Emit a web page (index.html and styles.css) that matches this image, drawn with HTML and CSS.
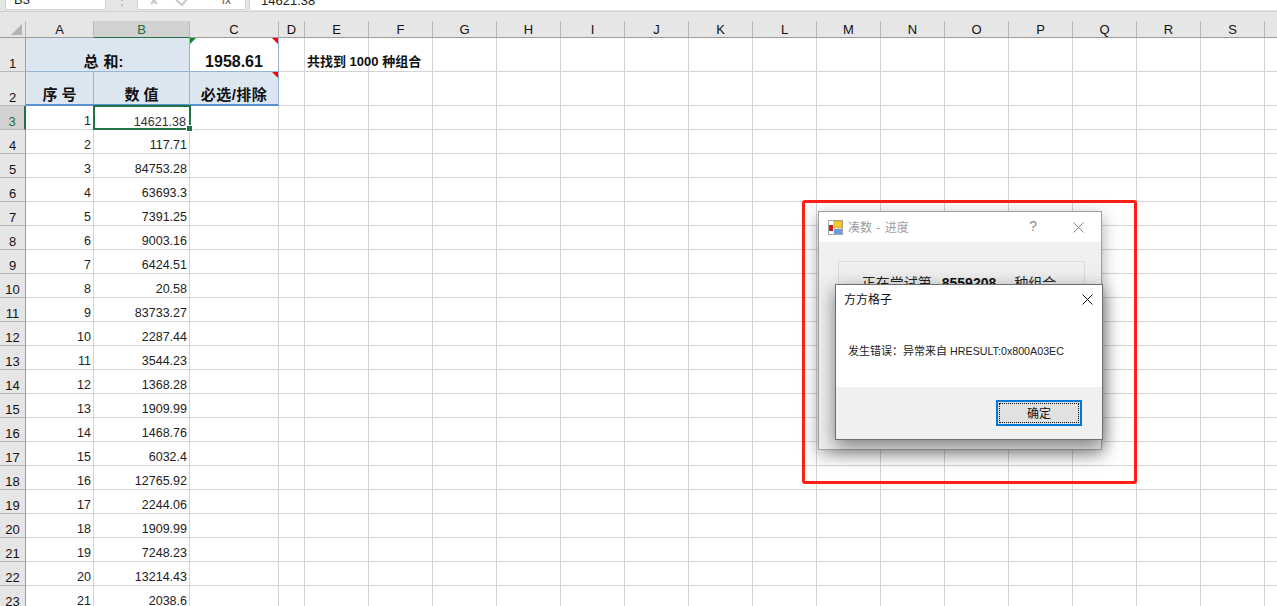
FILE: index.html
```html
<!DOCTYPE html>
<html lang="zh-CN">
<head>
    <meta charset="UTF-8">
    <title>方方格子 - 凑数</title>
    <link rel="stylesheet" href="styles.css">
</head>
<body>
    <div class="formula-bar">
        <div class="name-box">B3</div>
        <div class="bar-sep">⋮</div>
        <div class="fx-box">
            <svg width="60" height="10" viewBox="0 0 60 10"><path d="M13 -2 L19 4 M19 -2 L13 4" stroke="#c8c8c8" stroke-width="2" fill="none"/><path d="M38 0 L44 5 L50 -2" stroke="#c8c8c8" stroke-width="2" fill="none"/></svg>
            <span class="fx">fx</span>
        </div>
        <div class="formula-input">14621.38</div>
    </div>

    <div class="sheet">
        <div class="row col-head">
            <div class="corner"><i></i></div>
            <div class="ch col-a">A</div>
            <div class="ch col-b on">B</div>
            <div class="ch col-c">C</div>
            <div class="ch col-d">D</div>
            <div class="ch col-n">E</div><div class="ch col-n">F</div><div class="ch col-n">G</div><div class="ch col-n">H</div>
            <div class="ch col-n">I</div><div class="ch col-n">J</div><div class="ch col-n">K</div><div class="ch col-n">L</div>
            <div class="ch col-n">M</div><div class="ch col-n">N</div><div class="ch col-n">O</div><div class="ch col-n">P</div>
            <div class="ch col-n">Q</div><div class="ch col-n">R</div><div class="ch col-n">S</div><div class="ch col-n"></div>
        </div>

        <div class="row row-1">
            <div class="rh">1</div>
            <div class="c col-ab head-cell title sum-label">总 和:<span class="tri green"></span></div>
            <div class="c col-c total">1958.61<span class="tri red"></span></div>
            <div class="c col-d"></div>
            <div class="fill"><span class="found">共找到 1000 种组合</span></div>
        </div>
        <div class="row row-2">
            <div class="rh">2</div>
            <div class="c col-a head-cell title">序 号</div>
            <div class="c col-b head-cell title">数 值</div>
            <div class="c col-c head-cell title">必选/排除<span class="tri red"></span></div>
            <div class="c col-d"></div>
            <div class="fill"></div>
        </div>
        <div class="row">
            <div class="rh on">3</div>
            <div class="c col-a">1</div>
            <div class="c col-b selected">14621.38<span class="handle"></span></div>
            <div class="c col-c"></div><div class="c col-d"></div><div class="fill"></div>
        </div>
        <div class="row"><div class="rh">4</div><div class="c col-a">2</div><div class="c col-b">117.71</div><div class="c col-c"></div><div class="c col-d"></div><div class="fill"></div></div>
        <div class="row"><div class="rh">5</div><div class="c col-a">3</div><div class="c col-b">84753.28</div><div class="c col-c"></div><div class="c col-d"></div><div class="fill"></div></div>
        <div class="row"><div class="rh">6</div><div class="c col-a">4</div><div class="c col-b">63693.3</div><div class="c col-c"></div><div class="c col-d"></div><div class="fill"></div></div>
        <div class="row"><div class="rh">7</div><div class="c col-a">5</div><div class="c col-b">7391.25</div><div class="c col-c"></div><div class="c col-d"></div><div class="fill"></div></div>
        <div class="row"><div class="rh">8</div><div class="c col-a">6</div><div class="c col-b">9003.16</div><div class="c col-c"></div><div class="c col-d"></div><div class="fill"></div></div>
        <div class="row"><div class="rh">9</div><div class="c col-a">7</div><div class="c col-b">6424.51</div><div class="c col-c"></div><div class="c col-d"></div><div class="fill"></div></div>
        <div class="row"><div class="rh">10</div><div class="c col-a">8</div><div class="c col-b">20.58</div><div class="c col-c"></div><div class="c col-d"></div><div class="fill"></div></div>
        <div class="row"><div class="rh">11</div><div class="c col-a">9</div><div class="c col-b">83733.27</div><div class="c col-c"></div><div class="c col-d"></div><div class="fill"></div></div>
        <div class="row"><div class="rh">12</div><div class="c col-a">10</div><div class="c col-b">2287.44</div><div class="c col-c"></div><div class="c col-d"></div><div class="fill"></div></div>
        <div class="row"><div class="rh">13</div><div class="c col-a">11</div><div class="c col-b">3544.23</div><div class="c col-c"></div><div class="c col-d"></div><div class="fill"></div></div>
        <div class="row"><div class="rh">14</div><div class="c col-a">12</div><div class="c col-b">1368.28</div><div class="c col-c"></div><div class="c col-d"></div><div class="fill"></div></div>
        <div class="row"><div class="rh">15</div><div class="c col-a">13</div><div class="c col-b">1909.99</div><div class="c col-c"></div><div class="c col-d"></div><div class="fill"></div></div>
        <div class="row"><div class="rh">16</div><div class="c col-a">14</div><div class="c col-b">1468.76</div><div class="c col-c"></div><div class="c col-d"></div><div class="fill"></div></div>
        <div class="row"><div class="rh">17</div><div class="c col-a">15</div><div class="c col-b">6032.4</div><div class="c col-c"></div><div class="c col-d"></div><div class="fill"></div></div>
        <div class="row"><div class="rh">18</div><div class="c col-a">16</div><div class="c col-b">12765.92</div><div class="c col-c"></div><div class="c col-d"></div><div class="fill"></div></div>
        <div class="row"><div class="rh">19</div><div class="c col-a">17</div><div class="c col-b">2244.06</div><div class="c col-c"></div><div class="c col-d"></div><div class="fill"></div></div>
        <div class="row"><div class="rh">20</div><div class="c col-a">18</div><div class="c col-b">1909.99</div><div class="c col-c"></div><div class="c col-d"></div><div class="fill"></div></div>
        <div class="row"><div class="rh">21</div><div class="c col-a">19</div><div class="c col-b">7248.23</div><div class="c col-c"></div><div class="c col-d"></div><div class="fill"></div></div>
        <div class="row"><div class="rh">22</div><div class="c col-a">20</div><div class="c col-b">13214.43</div><div class="c col-c"></div><div class="c col-d"></div><div class="fill"></div></div>
        <div class="row"><div class="rh">23</div><div class="c col-a">21</div><div class="c col-b">2038.6</div><div class="c col-c"></div><div class="c col-d"></div><div class="fill"></div></div>
    </div>

    <!-- 进度窗口 -->
    <div class="win progress">
        <div class="win-title">
            <svg class="app-icon" width="15" height="15" viewBox="0 0 15 15">
                <rect x="0.5" y="0.5" width="14" height="14" fill="#fff" stroke="#a8a8a8"/>
                <rect x="6" y="1" width="8" height="7" fill="#f5c93a" stroke="#b8902a" stroke-width="0.6"/>
                <rect x="1" y="5" width="4" height="6" fill="#c8201c"/>
                <rect x="6" y="9" width="8" height="5" fill="#6a9be0"/>
            </svg>
            <span class="win-name">凑数 - 进度</span>
            <span class="help">?</span>
            <svg class="x-icon faded" width="11" height="11" viewBox="0 0 11 11"><path d="M0.5 0.5 L10.5 10.5 M10.5 0.5 L0.5 10.5" stroke="#8a8a8a" fill="none"/></svg>
        </div>
        <div class="win-body">
            <div class="group">正在尝试第 <b>8559208</b> 种组合</div>
        </div>
    </div>

    <!-- 错误提示 -->
    <div class="win alert">
        <div class="alert-title">
            <span class="alert-name">方方格子</span>
            <svg class="x-icon" width="11" height="11" viewBox="0 0 11 11"><path d="M0.5 0.5 L10.5 10.5 M10.5 0.5 L0.5 10.5" stroke="#111" fill="none"/></svg>
        </div>
        <div class="alert-msg">发生错误：异常来自 <span class="code">HRESULT:0x800A03EC</span></div>
        <div class="alert-foot">
            <button class="ok"><span>确定</span></button>
        </div>
    </div>

    <div class="red-box"></div>
</body>
</html>
```

FILE: styles.css
```css
body {
    margin: 0;
    height: 606px;
    overflow: hidden;
    position: relative;
    background-color: #fff;
    font-family: "Liberation Sans", "Noto Sans CJK SC", sans-serif;
    font-size: 12px;
    color: #222;
}

/* formula bar, cut off at the top of the picture */
.formula-bar {
    display: flex;
    height: 10px;
    background-color: #e6e6e6;
    padding-bottom: 1px;
    border-bottom: 1px solid #d0d0d0;
    overflow: hidden;
}
.name-box {
    width: 101px;
    margin-left: 5px;
    height: 10px;
    background-color: #fff;
    border: 1px solid #d4d4d4;
    border-top: none;
    box-sizing: border-box;
    line-height: 0;
    padding-left: 8px;
    font-size: 13px;
}
.bar-sep {
    width: 31px;
    line-height: 0;
    text-align: center;
    color: #aaa;
}
.fx-box {
    width: 109px;
    height: 10px;
    background-color: #fff;
    border: 1px solid #d4d4d4;
    border-top: none;
    box-sizing: border-box;
    display: flex;
    overflow: hidden;
}
.fx {
    font-style: italic;
    line-height: 0;
    margin-left: 24px;
    color: #555;
}
.formula-input {
    flex: 1;
    margin-left: 3px;
    height: 10px;
    background-color: #fff;
    border-left: 1px solid #d4d4d4;
    line-height: 1px;
    padding-left: 11px;
    font-size: 13px;
}

/* sheet */
.sheet {
    padding-top: 9px;
    background-color: #e6e6e6;
}
.row {
    display: flex;
    height: 24px;
    box-sizing: border-box;
    background-color: #fff;
    border-bottom: 1px solid #d4d4d4;
}
.row-1,
.row-2 {
    height: 34px;
}
.col-head {
    height: 17px;
    background-color: #e6e6e6;
    border-bottom: 1px solid #9c9c9c;
}
.corner {
    width: 26px;
    flex-shrink: 0;
    box-sizing: border-box;
    border-right: 1px solid #b8b8b8;
    position: relative;
}
.corner i {
    position: absolute;
    right: 3px;
    bottom: 2px;
    border-left: 11px solid transparent;
    border-bottom: 11px solid #b4b4b4;
}
.ch {
    box-sizing: border-box;
    flex-shrink: 0;
    border-right: 1px solid #b8b8b8;
    text-align: center;
    font-size: 13px;
    line-height: 18px;
    color: #111;
}
.ch.on {
    background-color: #d2d2d2;
    color: #1e6b41;
    box-shadow: 0 1px 0 #217346;
    border-bottom: 1px solid #217346;
    height: 17px;
}
.col-a { width: 68px; }
.col-b { width: 96px; }
.col-c { width: 89px; }
.col-d { width: 26px; }
.col-n { width: 64px; }
.col-ab { width: 164px; }

.rh {
    width: 26px;
    flex-shrink: 0;
    box-sizing: border-box;
    background-color: #e6e6e6;
    border-right: 1px solid #9c9c9c;
    margin-bottom: -1px;
    border-bottom: 1px solid #b8b8b8;
    display: flex;
    align-items: flex-end;
    justify-content: center;
    font-size: 13px;
    color: #111;
}
.rh.on {
    background-color: #d2d2d2;
    color: #1e6b41;
    border-right: 2px solid #217346;
}
.c {
    box-sizing: border-box;
    flex-shrink: 0;
    position: relative;
    border-right: 1px solid #d4d4d4;
    text-align: right;
    padding: 7px 2px 0 0;
    font-size: 12.5px;
    line-height: 16px;
}
.fill {
    flex: 1;
    position: relative;
    background: repeating-linear-gradient(90deg, transparent 0 63px, #d4d4d4 63px 64px);
}
.head-cell {
    background-color: #dce6f1;
    border-right: 1px solid #95b3d7;
    margin-bottom: -1px;
    border-bottom: 1px solid #95b3d7;
}
.row-2 .head-cell {
    border-bottom: 2px solid #5b8fd6;
}
.title {
    text-align: center;
    padding: 16px 0 0 0;
    font-size: 15px;
    font-weight: bold;
    color: #111;
}
.sum-label {
    padding-right: 8px;
    word-spacing: 1px;
}
.total {
    text-align: center;
    padding: 16px 0 0 0;
    font-size: 16px;
    font-weight: bold;
    color: #111;
    border-right: 1px solid #95b3d7;
    border-bottom: 1px solid #95b3d7;
    margin-bottom: -1px;
}
.row-2 .title {
    padding-top: 15px;
}
.row-2 .col-c.title {
    letter-spacing: 0.5px;
}
.found {
    position: absolute;
    left: 2px;
    top: 16px;
    font-size: 13px;
    line-height: 16px;
    font-weight: bold;
    white-space: nowrap;
    color: #111;
}
.tri {
    position: absolute;
    top: 0;
}
.tri.green {
    display: none;
}
.tri.red {
    right: 0;
    border-left: 6px solid transparent;
    border-top: 6px solid #f00;
}
.col-ab .tri.green {
    display: block;
    left: 164px;
    border-right: 6px solid transparent;
    border-top: 6px solid #0a8a2a;
    z-index: 1;
}
.selected {
    border: 2px solid #217346;
    margin: -1px -1px -1px -1px;
    width: 98px;
    padding: 7px 3px 0 0;
    height: 25px;
    z-index: 2;
    color: #333;
}
.handle {
    position: absolute;
    right: -4px;
    bottom: -4px;
    width: 5px;
    height: 5px;
    background-color: #217346;
    border: 1px solid #fff;
}

/* windows */
.win {
    position: absolute;
    box-sizing: border-box;
    background-color: #f0f0f0;
    box-shadow: 0 5px 16px rgba(0, 0, 0, 0.35);
}
.progress {
    left: 818px;
    top: 211px;
    width: 284px;
    height: 239px;
    border: 1px solid #a0a0a0;
}
.win-title {
    height: 30px;
    background-color: #fff;
    display: flex;
    align-items: center;
    padding-left: 9px;
    color: #9a9a9a;
}
.win-name {
    margin: 0 0 2px 5px;
    flex: 1;
    font-size: 12px;
    word-spacing: 1px;
    color: #a0a0a0;
}
.help {
    font-size: 14px;
    color: #8a8a8a;
    margin: 0 36px 2px 0;
}
.x-icon.faded {
    margin-right: 17px;
}
.win-body {
    padding: 19px 16px 0 19px;
}
.group {
    height: 100px;
    border: 1px solid #dcdcdc;
    padding: 11px 5px 0 0;
    box-sizing: border-box;
    text-align: center;
    font-size: 14px;
    line-height: 20px;
    color: #222;
}
.group b {
    margin: 0 14px 0 6px;
    color: #111;
}

.alert {
    left: 835px;
    top: 284px;
    width: 268px;
    height: 156px;
    background-color: #fff;
    border: 1px solid #6e6e6e;
    box-shadow: 0 6px 18px rgba(0, 0, 0, 0.5);
    display: flex;
    flex-direction: column;
}
.alert-title {
    height: 28px;
    display: flex;
    align-items: center;
    justify-content: space-between;
    padding: 0 9px 0 8px;
    color: #111;
}
.alert-name {
    margin-bottom: 2px;
}
.alert-msg {
    flex: 1;
    padding: 30px 0 0 12px;
    line-height: 16px;
    font-size: 11px;
}
.code {
    font-size: 10.7px;
}
.alert-foot {
    height: 52px;
    background-color: #f0f0f0;
    display: flex;
    justify-content: flex-end;
    align-items: flex-start;
    padding: 13px 20px 0 0;
    box-sizing: border-box;
}
.ok {
    width: 86px;
    height: 26px;
    padding: 0;
    background-color: #e1e1e1;
    border: 2px solid #0078d7;
    font: inherit;
    color: #111;
}
.ok span {
    display: block;
    height: 20px;
    margin: 1px;
    line-height: 20px;
    border: 1px dotted #111;
    box-sizing: border-box;
}

.red-box {
    position: absolute;
    left: 802px;
    top: 200px;
    width: 335px;
    height: 284px;
    box-sizing: border-box;
    border: 3px solid #ff1f14;
    border-radius: 3px;
    pointer-events: none;
}
```
